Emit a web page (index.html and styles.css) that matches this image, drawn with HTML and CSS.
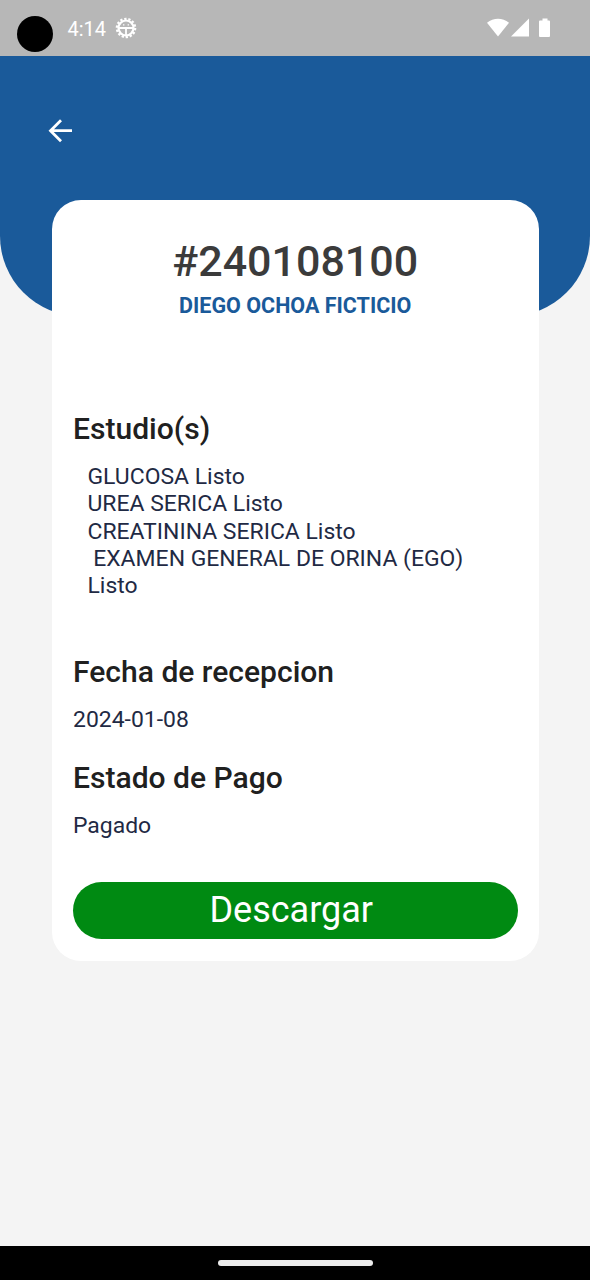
FILE: index.html
```html
<!DOCTYPE html>
<html lang="es">
<head>
<meta charset="utf-8">
<title>Resultados</title>
<link rel="stylesheet" href="styles.css">
</head>
<body>
<header class="status">
  <span class="camera"></span>
  <span class="time">4:14</span>
  <svg class="gear" viewBox="0 0 22 22" width="22" height="22" fill="none" stroke="#fff">
    <circle cx="11" cy="11" r="7.500" stroke-width="2.200"/>
    <circle cx="11" cy="11" r="9.200" stroke-width="2.200" stroke-dasharray="2.3 1.829"/>
    <path d="M4 11h14M11 11v7" stroke-width="1.800"/>
    <path d="M8 7.800h1.400M12.600 7.800h1.400" stroke-width="1.200"/>
  </svg>
  <svg class="signals" viewBox="0 0 64 20" width="64" height="20" fill="#fff">
    <path d="M0 4.700C6.500-.700 15.500-.700 22 4.700L11 18.500z"/>
    <path d="M42 .500v18H24z"/>
    <path d="M53 2.500h2.500V.500h5v2H62q1 0 1 1V18q0 1-1 1H53q-1 0-1-1V3.500q0-1 1-1z"/>
  </svg>
</header>
<main class="screen">
  <div class="hero">
    <svg class="back" viewBox="0 0 24 24" width="24" height="24" fill="none" stroke="#fff" stroke-width="2.800"><path d="M24 11.700H2.500M13 1.200L2.500 11.700 13 22.200"/></svg>
  </div>
  <section class="card">
    <h1 class="folio">#240108100</h1>
    <p class="patient">DIEGO OCHOA FICTICIO</p>
    <h2 class="heading studies-heading">Estudio(s)</h2>
    <p class="studies">GLUCOSA Listo<br>UREA SERICA Listo<br>CREATININA SERICA Listo<br>&nbsp;EXAMEN GENERAL DE ORINA (EGO)<br>Listo</p>
    <h2 class="heading">Fecha de recepcion</h2>
    <p class="value">2024-01-08</p>
    <h2 class="heading">Estado de Pago</h2>
    <p class="value">Pagado</p>
    <button class="download">Descargar</button>
  </section>
</main>
<footer class="nav"><span class="handle"></span></footer>
</body>
</html>
```
FILE: styles.css
```css
* { box-sizing: border-box; margin: 0; padding: 0; }
body { width: 590px; height: 1280px; display: flex; flex-direction: column; background: #f4f4f4; font-family: Roboto, sans-serif; overflow: hidden; }
.status { height: 56px; flex: none; display: flex; align-items: center; padding: 0 39px 0 17px; background: #b7b7b7; }
.camera { width: 36px; height: 36px; margin-top: 12px; border-radius: 50%; background: #000; }
.time { margin: 2px 0 0 14.5px; color: #fff; font-size: 20px; }
.gear { margin-left: 8.5px; }
.signals { margin-left: auto; }
.screen { flex: 1; }
.hero { height: 260px; padding: 63px 48px; background: #1a5a9a; border-radius: 0 0 80px 80px; }
.back { display: block; }
.card { width: 487.5px; height: 761px; margin: -116px 0 0 51.5px; padding: 35px 21.5px 22px; background: #fff; border-radius: 29px; }
.folio { height: 52px; line-height: 52px; text-align: center; font-size: 43px; font-weight: 500; color: #3b3b3b; }
.patient { height: 38px; line-height: 38px; text-align: center; font-size: 21.5px; font-weight: 700; color: #1a5a9a; }
.heading { height: 36px; line-height: 36px; font-size: 30.05px; font-weight: 500; color: #202020; }
.studies-heading { margin-top: 86px; }
.studies { margin: 16px 0 54.5px 14.5px; line-height: 27.3px; font-size: 22.95px; color: #1f2a44; white-space: nowrap; }
.value { height: 28px; margin: 16px 0 26px; line-height: 28px; font-size: 22.95px; color: #1f2a44; }
.download { display: block; width: 444.5px; height: 57px; margin-top: 42px; padding-right: 8px; border: 0; border-radius: 29px; background: #008a12; color: #fff; font: 400 36px/57px Roboto, sans-serif; }
.nav { height: 34px; flex: none; display: flex; align-items: center; justify-content: center; background: #000; }
.handle { width: 155px; height: 6px; border-radius: 3px; background: #ececec; }
```
